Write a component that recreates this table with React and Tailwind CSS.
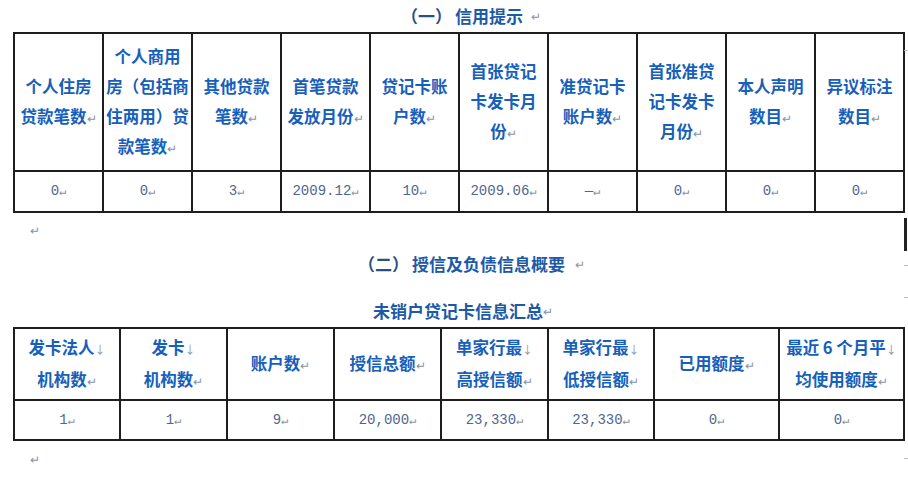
import React from "react";

const CJK = { fontFamily: '"Noto Sans CJK SC", "Noto Sans", sans-serif' };
const MONO = { fontFamily: '"Liberation Mono", "Noto Sans CJK SC", monospace' };

// 段落标记
function Mark({ className = "" }) {
  return <span className={`text-[12px] font-normal text-[#8a93a6] ${className}`}>↵</span>;
}

function Br() {
  return <span className="text-[11px] font-normal text-[#8a93a6]">↓</span>;
}

const creditHeads = [
  ["个人住房", "贷款笔数"],
  ["个人商用", "房（包括商", "住两用）贷", "款笔数"],
  ["其他贷款", "笔数"],
  ["首笔贷款", "发放月份"],
  ["贷记卡账", "户数"],
  ["首张贷记", "卡发卡月", "份"],
  ["准贷记卡", "账户数"],
  ["首张准贷", "记卡发卡", "月份"],
  ["本人声明", "数目"],
  ["异议标注", "数目"],
];
const creditVals = ["0", "0", "3", "2009.12", "10", "2009.06", "—", "0", "0", "0"];

const cardHeads = [
  { lines: ["发卡法人", "机构数"], w: "w-[106px]" },
  { lines: ["发卡", "机构数"], w: "w-[107px]" },
  { lines: ["账户数"], w: "w-[107px]" },
  { lines: ["授信总额"], w: "w-[107px]" },
  { lines: ["单家行最", "高授信额"], w: "w-[107px]" },
  { lines: ["单家行最", "低授信额"], w: "w-[106px]" },
  { lines: ["已用额度"], w: "w-[125px]" },
  { lines: ["最近 6 个月平", "均使用额度"], w: "w-[125px]" },
];
const cardVals = ["1", "1", "9", "20,000", "23,330", "23,330", "0", "0"];

function HeadCell({ lines, w, arrow }) {
  return (
    <th className={`${w} border-2 border-[#1e1e1e] px-[1px] align-middle text-center text-[16.5px] font-bold leading-[30px] text-[#1660bb]`} style={CJK}>
      {lines.map((l, i) => (
        <div key={i} className="whitespace-nowrap">
          {l}
          {i === lines.length - 1 ? <Mark /> : arrow ? <Br /> : null}
        </div>
      ))}
    </th>
  );
}

function ValCell({ v }) {
  return (
    <td className="border-2 border-[#1e1e1e] text-center align-middle text-[14px] text-[#4f6690]" style={MONO}>
      {v}
      <Mark />
    </td>
  );
}

export default function App() {
  return (
    <div className="relative w-[908px] h-[484px] overflow-hidden bg-white" style={CJK}>
      {/* (一) 信用提示 */}
      <div className="h-[32px] flex items-center pl-[401px] text-[17px] font-bold text-[#1c5aa8]">
        <span className="text-[#2a4f86]">（一）</span>
        <span className="ml-[3px]">信用提示</span>
        <Mark className="ml-[8px]" />
      </div>

      <table className="ml-[13px] w-[890px] border-collapse table-fixed">
        <tbody>
          <tr className="h-[138px]">
            {creditHeads.map((h, i) => (
              <HeadCell key={i} lines={h} w="w-[89px]" />
            ))}
          </tr>
          <tr className="h-[41px]">
            {creditVals.map((v, i) => (
              <ValCell key={i} v={v} />
            ))}
          </tr>
        </tbody>
      </table>

      <div className="h-[34px] flex items-center pl-[30px]">
        <Mark />
      </div>

      {/* (二) 授信及负债信息概要 */}
      <div className="h-[34px] flex items-center pl-[358px] text-[17px] font-bold text-[#1c5aa8]">
        <span className="text-[#2a4f86]">（二）</span>
        <span className="ml-[3px]">授信及负债信息概要</span>
        <Mark className="ml-[10px]" />
      </div>

      <div className="h-[46px] flex items-end pb-[5px] pl-[373px] text-[17px] font-bold leading-[22px] text-[#1c5aa8]">
        未销户贷记卡信息汇总
        <Mark />
      </div>

      <table className="ml-[13px] w-[890px] border-collapse table-fixed">
        <tbody>
          <tr className="h-[72px]">
            {cardHeads.map((h, i) => (
              <HeadCell key={i} lines={h.lines} w={h.w} arrow />
            ))}
          </tr>
          <tr className="h-[40px]">
            {cardVals.map((v, i) => (
              <ValCell key={i} v={v} />
            ))}
          </tr>
        </tbody>
      </table>

      <div className="h-[36px] flex items-center pl-[30px]">
        <Mark />
      </div>

      {/* 右侧边缘的标记 */}
      <div className="absolute right-[1px] top-[218px] h-[33px] w-[3px] bg-[#222]" />
      <div className="absolute right-0 top-[50px] h-[1px] w-[4px] bg-[#bbb]" />
      <div className="absolute right-0 top-[265px] h-[1px] w-[4px] bg-[#bbb]" />
      <div className="absolute right-0 top-[297px] h-[1px] w-[4px] bg-[#bbb]" />
      <div className="absolute right-0 top-[458px] h-[1px] w-[4px] bg-[#bbb]" />
    </div>
  );
}
